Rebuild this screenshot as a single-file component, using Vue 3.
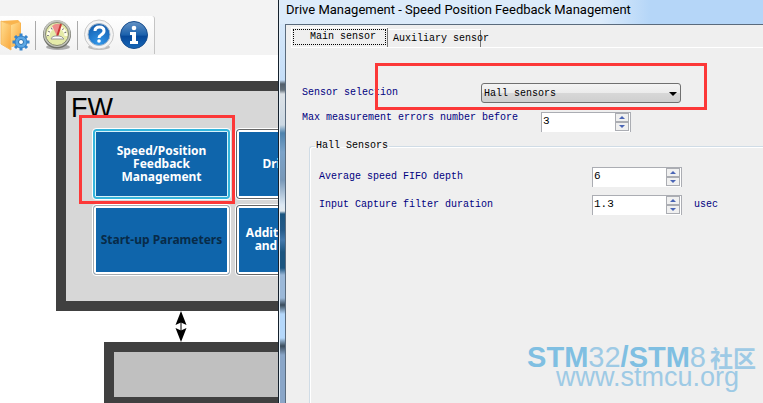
<template>
  <div class="desktop">
    <main class="workspace">
      <header class="toolbar">
        <nav class="tools">
          <button class="tool" aria-label="Project settings">
            <svg width="30" height="32" viewBox="0 0 30 32">
              <defs>
                <linearGradient id="folder" x1="0" y1="0" x2="1" y2="1">
                  <stop offset="0" stop-color="#ffdf92" />
                  <stop offset="1" stop-color="#f9a63a" />
                </linearGradient>
              </defs>
              <path d="M1 2 18 1l3 3v21l-9 3L1 24z" fill="#f9b44d" />
              <path d="M1 2 11 6v25L1 25z" fill="url(#folder)" stroke="#f7bb62" />
              <path d="m11 6 9-3v21l-9 4z" fill="url(#folder)" />
              <g transform="translate(21 23)">
                <rect
                  v-for="n in 8"
                  :key="n"
                  x="-1.5"
                  y="-8.5"
                  width="3"
                  height="5"
                  fill="#3684cc"
                  :transform="`rotate(${n * 45})`"
                />
                <circle r="6" fill="#5ba7e4" stroke="#347fc4" />
                <circle r="2.5" fill="#fff" stroke="#286fae" />
              </g>
            </svg>
          </button>
          <span class="divider"></span>
          <button class="tool" aria-label="Monitor">
            <svg width="30" height="32" viewBox="0 0 30 32">
              <ellipse cx="16" cy="28" rx="12" ry="3" fill="#aaa" />
              <circle cx="15" cy="15.500" r="14" fill="#6f7068" />
              <circle cx="15" cy="14.500" r="13.500" fill="#c3c5bd" />
              <circle cx="15" cy="15" r="11.500" fill="#e5eba9" stroke="#858775" />
              <path d="M6 17a9 9 0 0 1 18 0" fill="none" stroke="#fffde9" stroke-width="3" />
              <path d="M6 17a9 9 0 0 1 18 0" fill="none" stroke="#777" stroke-dasharray="1 3" stroke-width="2" />
              <path d="m15 17-5-10q5-4 9-1z" fill="#ee8d8b" />
              <path d="m15 18 4-13" stroke="#c93737" stroke-width="2" />
              <path d="M9 20q1-3 4-3h4q3 0 5 3z" fill="#fff" stroke="#999" />
            </svg>
          </button>
          <span class="divider"></span>
          <button class="tool" aria-label="Help">
            <svg width="32" height="32" viewBox="0 0 32 32">
              <defs>
                <radialGradient id="ball" cx=".5" cy=".9" r=".9">
                  <stop offset="0" stop-color="#3298eb" />
                  <stop offset="1" stop-color="#125cad" />
                </radialGradient>
              </defs>
              <ellipse cx="16" cy="28" rx="11" ry="3" fill="#bbb" />
              <circle cx="16" cy="15.500" r="14.500" fill="#f4f4f4" stroke="#c9c9c9" />
              <circle cx="16" cy="15.500" r="11" fill="url(#ball)" stroke="#a8bacb" />
              <path d="M12 12q0-4 4.500-4t4.500 4q0 2-3 4-2 1-2 3" fill="none" stroke="#fff" stroke-width="3" />
              <circle cx="16" cy="22" r="1.800" fill="#fff" />
            </svg>
          </button>
          <button class="tool info" aria-label="Information">
            <svg width="30" height="32" viewBox="0 0 30 32">
              <defs>
                <linearGradient id="disc" x1="0" y1="0" x2="0" y2="1">
                  <stop offset="0" stop-color="#6593c5" />
                  <stop offset=".5" stop-color="#1b61ac" />
                  <stop offset=".55" stop-color="#07499a" />
                  <stop offset="1" stop-color="#1768b7" />
                </linearGradient>
              </defs>
              <circle cx="15" cy="16" r="13.500" fill="url(#disc)" stroke="#174d8d" />
              <circle cx="15" cy="9" r="2.300" fill="#fff" />
              <path d="M11 13h6v9h2v3h-8v-3h2v-6h-2z" fill="#fff" />
            </svg>
          </button>
        </nav>
      </header>

      <section class="firmware">
        <h1>FW</h1>
        <div class="blocks">
          <button
            v-for="block in blocks"
            :key="block.text"
            class="block"
            :class="block.state"
          >
            {{ block.text }}
          </button>
          <div class="highlight"></div>
        </div>
      </section>

      <svg class="link-arrow" width="12" height="31" viewBox="0 0 12 31">
        <path d="M6 0l5.500 14L6 11.500.500 14zM6 31l5.500-14L6 19.500.500 17z" />
        <path d="M6 10v11" stroke="#000" />
      </svg>

      <section class="hardware"></section>
    </main>

    <section class="dialog">
      <h2 class="title">Drive Management - Speed Position Feedback Management</h2>
      <form class="client" @submit.prevent>
        <div class="tabs">
          <button
            v-for="tab in tabs"
            :key="tab"
            type="button"
            class="tab"
            :class="{ active: tab === activeTab }"
            @click="activeTab = tab"
          >
            {{ tab }}
          </button>
        </div>

        <div class="panel">
          <div class="row sensor">
            <label for="sensor">Sensor selection</label>
            <div class="combo">
              <select id="sensor" v-model="sensor">
                <option>Hall sensors</option>
                <option>Quadrature encoder</option>
              </select>
              <svg width="8" height="4" viewBox="0 0 8 4"><path d="M0 0h8L4 4z" /></svg>
            </div>
            <div class="highlight"></div>
          </div>

          <div class="row errors">
            <label for="errors">Max measurement errors number before</label>
            <div class="spinner">
              <input id="errors" v-model="maxErrors" type="text" />
              <div class="steps">
                <button type="button" aria-label="Increase" @click="maxErrors++">
                  <svg width="6" height="3" viewBox="0 0 6 3"><path d="M0 3h6L3 0z" /></svg>
                </button>
                <button type="button" aria-label="Decrease" @click="maxErrors--">
                  <svg width="6" height="3" viewBox="0 0 6 3"><path d="M0 0h6L3 3z" /></svg>
                </button>
              </div>
            </div>
          </div>

          <fieldset>
            <legend>Hall Sensors</legend>
            <div v-for="field in hallFields" :key="field.id" class="row">
              <label :for="field.id">{{ field.label }}</label>
              <div class="spinner">
                <input :id="field.id" v-model="field.value" type="text" />
                <div class="steps">
                  <button type="button" aria-label="Increase" @click="step(field, 1)">
                    <svg width="6" height="3" viewBox="0 0 6 3"><path d="M0 3h6L3 0z" /></svg>
                  </button>
                  <button type="button" aria-label="Decrease" @click="step(field, -1)">
                    <svg width="6" height="3" viewBox="0 0 6 3"><path d="M0 0h6L3 3z" /></svg>
                  </button>
                </div>
              </div>
              <span v-if="field.unit" class="unit">{{ field.unit }}</span>
            </div>
          </fieldset>
        </div>
      </form>

      <div class="watermark">
        <div class="brand"><b>STM</b>32<b>/STM</b>8<b class="cjk">社区</b></div>
        <div class="site">www.stmcu.org</div>
      </div>
    </section>
  </div>
</template>

<script setup>
import { ref } from 'vue'

const blocks = [
  { text: 'Speed/Position\nFeedback\nManagement', state: 'selected' },
  { text: 'Drive Settings', state: 'dark-edge' },
  { text: 'Start-up Parameters', state: 'disabled' },
  { text: 'Additional Features\nand PFC Settings', state: 'dark-edge' }
]

const tabs = ['Main sensor', 'Auxiliary sensor']
const activeTab = ref('Main sensor')

const sensor = ref('Hall sensors')
const maxErrors = ref(3)

const hallFields = ref([
  { id: 'fifo', label: 'Average speed FIFO depth', value: 6, step: 1 },
  { id: 'filter', label: 'Input Capture filter duration', value: 1.3, step: 0.1, unit: 'usec' }
])

function step(field, direction) {
  field.value = Number((Number(field.value) + direction * field.step).toFixed(1))
}
</script>

<style>
body {
  margin: 0;
}
</style>

<style scoped>
* {
  box-sizing: border-box;
}

.desktop {
  display: grid;
  grid-template-columns: 278px 1fr;
  min-height: 100vh;
  background: #fff;
}

button {
  cursor: pointer;
}

.workspace {
  display: flex;
  flex-direction: column;
  min-width: 0;
  overflow: hidden;
}

.toolbar {
  flex: none;
  height: 55px;
  padding-top: 16px;
  background: #f3f3f3;
}

.tools {
  display: flex;
  align-items: center;
  width: 155px;
  height: 38px;
  background: linear-gradient(#fff, #f1f1f1);
  border-right: 1px solid #c4c4c4;
  border-top-right-radius: 3px;
}

.tool {
  display: flex;
  padding: 0;
  border: none;
  background: none;
}

.divider {
  width: 1px;
  height: 29px;
  margin: 0 6px 0 5px;
  background: #aaa;
}

.divider + .tool:nth-child(5) {
  margin-left: -1px;
}

.info {
  margin-left: 4px;
}

.firmware {
  flex: none;
  height: 230px;
  margin: 26px 0 0 56px;
  border: solid #404040;
  border-width: 10px 0 10px 10px;
  background: #d7d7d7;
}

h1 {
  margin: 0;
  padding: 3px 0 0 5px;
  font: 27px/28px "Liberation Sans", Arial, sans-serif;
  color: #000;
}

.blocks {
  position: relative;
  display: grid;
  grid-template-columns: 139px 139px;
  grid-auto-rows: 72px;
  gap: 4px;
  margin: 6px 0 0 26px;
}

.block {
  margin: 1px;
  padding: 0 0 2px;
  border: 1px solid #a5abb0;
  border-radius: 3px;
  outline: 1px solid #fff;
  background: #0f65ab;
  box-shadow: inset 0 0 0 2px #fff;
  color: #fff;
  font: bold 12px/13px "Noto Sans", sans-serif;
  white-space: pre;
}

.block.selected {
  border: 2px solid #35b5dc;
  box-shadow: inset 0 0 0 1px #d8f3fa;
}

.block.disabled {
  color: #082b48;
}

.block.dark-edge {
  border-color: #666;
}

.highlight {
  position: absolute;
  inset: -13px auto auto -13px;
  width: 156px;
  height: 89px;
  border: 3px solid #fc3838;
  pointer-events: none;
}

.link-arrow {
  flex: none;
  margin-left: 175px;
}

.hardware {
  flex: 1 0 61px;
  margin-left: 104px;
  border: solid #404040;
  border-width: 10px 0 6px 10px;
  background: #c0c0c0;
}

.dialog {
  position: relative;
  display: flex;
  flex-direction: column;
  min-width: 0;
  padding-left: 7px;
  border-left: 1px solid #14202c;
  background: linear-gradient(
    #dcebfa 0, #c5def8 80px, #535f6b 84px, #64707b 90px, #dce2e7 94px,
    #cbd8e3 125px, #4e83ad 133px, #7ba3c9 152px, #7898b8 180px, #dce8f3 205px,
    #e2e9ee 211px, #1b5580 214px, #255b8a 230px, #4479ac 240px, #1b5580 252px,
    #1b5580 268px, #9bb8d8 275px, #9bb8d8 298px, #3a4c5c 305px, #b5d8fb 314px,
    #b5d8fb 338px, #3a4c5c 346px, #8aa6c8 355px, #8aa6c8 100%
  );
  box-shadow: inset 1px 0 #e3eef7;
}

.title {
  flex: none;
  height: 24px;
  margin: 0 0 0 -6px;
  padding-left: 6px;
  background: linear-gradient(90deg, #dcebfa, #dcebfa 320px, #b5d6f8 370px);
  font: 13px/20px Roboto, sans-serif;
  color: #000;
  white-space: nowrap;
}

.client {
  flex: 1;
  display: flex;
  flex-direction: column;
  margin-left: -1px;
  border: solid #5a6b7d;
  border-width: 1px 0 0 1px;
  background: #efefef;
  font: 10px/12px "Liberation Mono", monospace;
  color: #000080;
}

.tabs {
  display: flex;
  align-items: flex-end;
  height: 23px;
  margin-left: 5px;
  border-bottom: 1px solid #fff;
}

.tab {
  width: 93px;
  height: 18px;
  padding: 0 0 0 5px;
  border: solid #fff;
  border-width: 1px 0 0;
  box-shadow: inset -1px 0 #777;
  background: #efefef;
  color: #000;
  font: inherit;
  text-align: left;
  white-space: nowrap;
}

.tab.active {
  width: 97px;
  height: 20px;
  padding: 0 0 2px 18px;
  border-left-width: 1px;
  outline: 1px dotted #000;
  outline-offset: -3px;
}

.panel {
  flex: 1;
  display: flex;
  flex-direction: column;
  padding: 35px 0 0 16px;
}

.row {
  position: relative;
  display: flex;
  align-items: flex-start;
  height: 28px;
}

.row label {
  flex: none;
  width: 239px;
  padding-top: 4px;
  white-space: nowrap;
}

.row.sensor {
  height: 29px;
}

.row > .highlight {
  inset: -20px auto auto 73px;
  width: 332px;
  height: 47px;
}

.combo {
  position: relative;
  width: 200px;
  margin-left: -60px;
}

.combo select {
  appearance: none;
  display: block;
  width: 100%;
  height: 20px;
  padding: 2px 2px 0;
  border: 1px solid #707070;
  border-radius: 3px;
  background: linear-gradient(#f4f4f4, #ebebeb 50%, #d7d7d7 52%, #cfcfcf);
  color: #000;
  font: inherit;
}

.combo svg {
  position: absolute;
  top: 9px;
  right: 4px;
  pointer-events: none;
}

.spinner {
  display: flex;
  width: 90px;
  height: 20px;
  border: solid #abadb3;
  border-width: 1px 1px 0;
  background: #fff;
}

.spinner input {
  flex: 1;
  min-width: 0;
  height: 15px;
  padding: 0 1px;
  border: none;
  outline: none;
  background: none;
  color: #000;
  font: 11px/12px "Liberation Mono", monospace;
}

.steps {
  display: flex;
  flex-direction: column;
  width: 14px;
  height: 18px;
  margin-right: 1px;
}

.steps button {
  flex: 1;
  display: flex;
  align-items: center;
  justify-content: center;
  padding: 0;
  border: 1px solid #abadb3;
  background: #f0f0f0;
}

.steps path {
  fill: #4a65b5;
}

.errors label {
  padding-top: 0;
}

fieldset {
  flex: 1;
  min-width: 0;
  margin: 0 0 0 7px;
  padding: 15px 0 0 9px;
  border: solid #d0dce6;
  border-width: 1px 0 0 1px;
  border-top-left-radius: 3px;
  box-shadow: inset 1px 1px #fff;
}

legend {
  margin-left: -4px;
  padding: 0 1px;
  color: #000;
}

fieldset .row label {
  width: 273px;
}

.unit {
  padding: 4px 0 0 12px;
}

.watermark {
  position: absolute;
  right: 7px;
  bottom: 16px;
  color: #9ecae5;
  font: 27px/20px "Liberation Sans", Arial, sans-serif;
  text-align: right;
  white-space: nowrap;
  pointer-events: none;
}

.brand {
  font-size: 29px;
}

.site {
  padding-right: 17px;
}

.brand b {
  color: #7fbfe2;
}

.brand .cjk {
  margin-left: 4px;
  color: #9ecae5;
  font: bold 23px/20px "Noto Sans CJK SC", sans-serif;
}
</style>
